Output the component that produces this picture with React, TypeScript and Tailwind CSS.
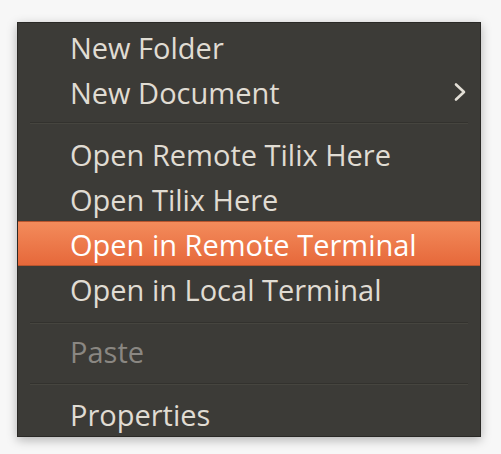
import React from 'react';

type Entry =
  | { kind: 'item'; label: string; active?: boolean; disabled?: boolean; submenu?: boolean }
  | { kind: 'sep'; line: string };

const entries: Entry[] = [
  { kind: 'item', label: 'New Folder' },
  { kind: 'item', label: 'New Document', submenu: true },
  { kind: 'sep', line: 'mt-[8px]' },
  { kind: 'item', label: 'Open Remote Tilix Here' },
  { kind: 'item', label: 'Open Tilix Here' },
  { kind: 'item', label: 'Open in Remote Terminal', active: true },
  { kind: 'item', label: 'Open in Local Terminal' },
  { kind: 'sep', line: 'mt-[11px]' },
  { kind: 'item', label: 'Paste', disabled: true },
  { kind: 'sep', line: 'mt-[10px]' },
  { kind: 'item', label: 'Properties' },
];

const Chevron = () => (
  <svg width="14" height="20" viewBox="0 0 14 20" className="absolute right-[13px] top-[13px]">
    <path d="M3 2.5 L11 10 L3 17.5" fill="none" stroke="#e3dfd6" strokeWidth="2.6" strokeLinecap="round" strokeLinejoin="round" />
  </svg>
);

const MenuRow: React.FC<{ item: Extract<Entry, { kind: 'item' }> }> = ({ item }) => (
  <div
    className={`relative h-[45px] flex items-center pl-[52px] ${
      item.active
        ? 'bg-gradient-to-b from-[#f38b5b] to-[#e6683a] border-y border-[#b8552e] text-white'
        : item.disabled
        ? 'text-[#8a8782]'
        : 'text-[#e0dcd3]'
    }`}
  >
    <span className="leading-none pt-[2px]">{item.label}</span>
    {item.submenu && <Chevron />}
  </div>
);

export default function App() {
  return (
    <div className="w-[501px] h-[454px] bg-[#f7f7f7] pl-[17px] pt-[22px]">
      <div
        className="w-[464px] h-[415px] bg-[#3c3b37] border border-[#2a2926] shadow-[0_3px_10px_rgba(0,0,0,0.28)] pt-[1px] flex flex-col text-[29px]"
        style={{ fontFamily: '"Open Sans", "DejaVu Sans", sans-serif' }}
      >
        {entries.map((e, i) =>
          e.kind === 'sep' ? (
            <div key={i} className="h-[18px] px-[12px]">
              <div className={`${e.line} border-t border-[#33322e] border-b border-b-[#46453f]`} />
            </div>
          ) : (
            <MenuRow key={i} item={e} />
          )
        )}
      </div>
    </div>
  );
}
